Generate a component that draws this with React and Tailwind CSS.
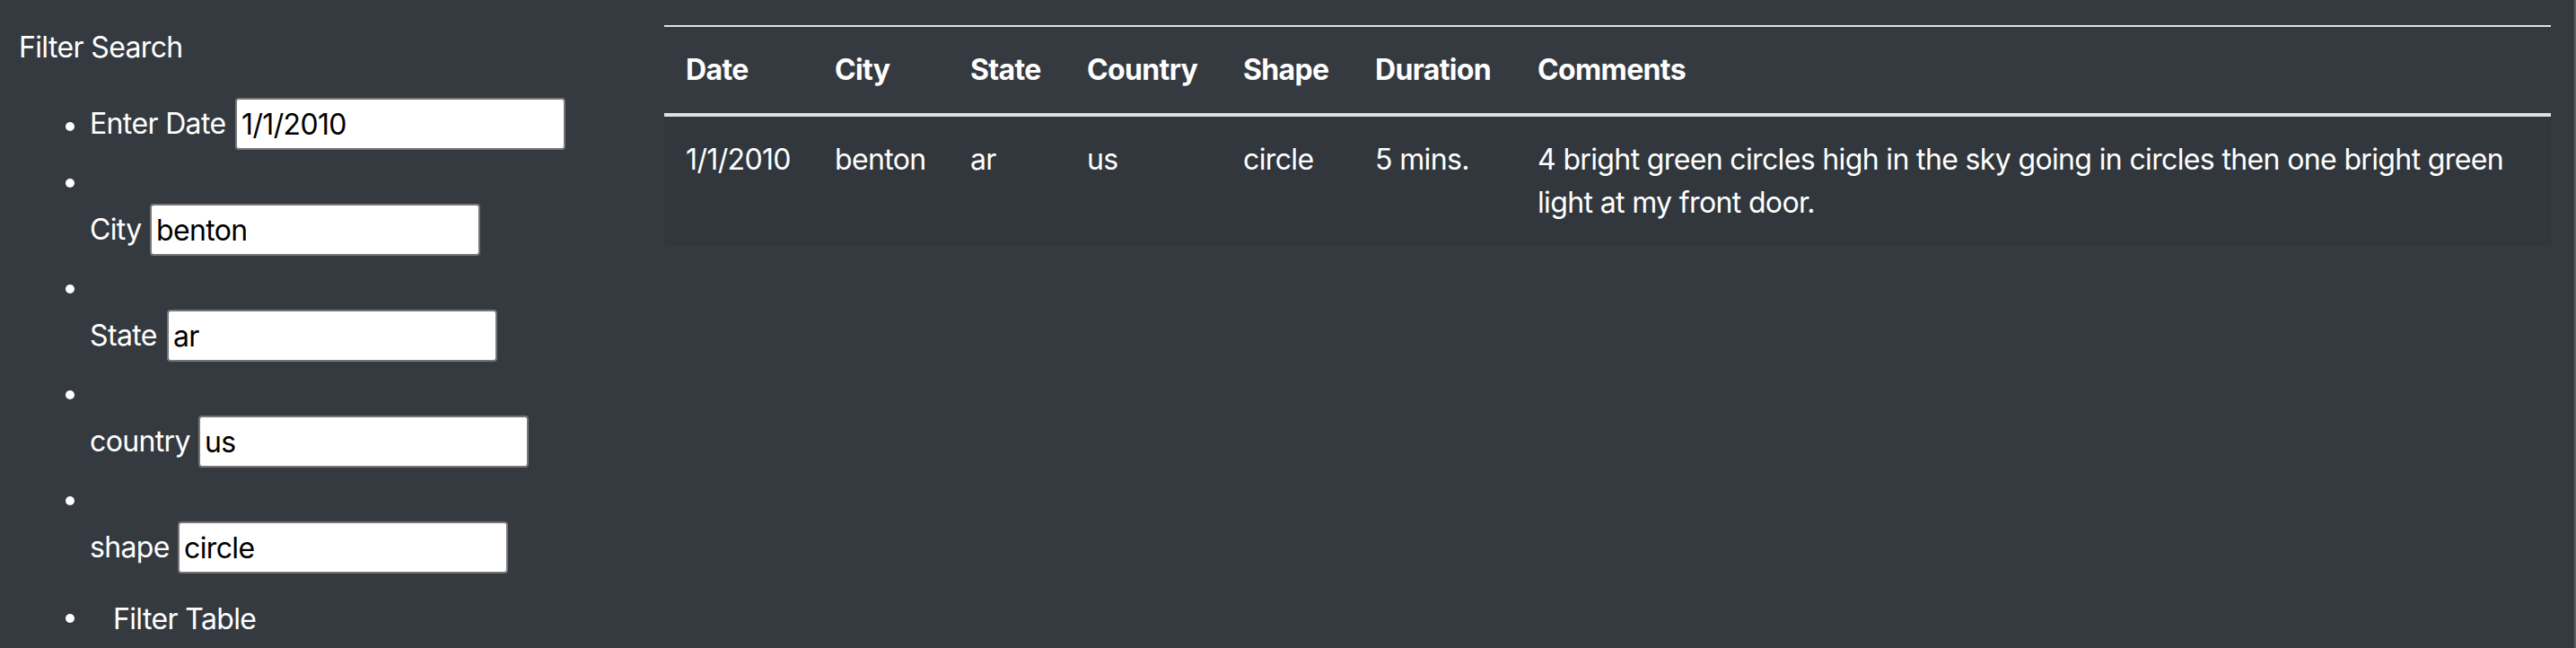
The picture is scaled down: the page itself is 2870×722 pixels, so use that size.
import React from "react";

const fields = [
  { label: "City", value: "benton", lw: "w-[58px]" },
  { label: "State", value: "ar", lw: "w-[77px]" },
  { label: "country", value: "us", lw: "w-[112px]" },
  { label: "shape", value: "circle", lw: "w-[89px]" },
];

function Bullet({ extra = "" }) {
  return (
    <span className="flex w-[27px] shrink-0">
      <span className={"block w-[10px] h-[10px] rounded-full bg-white " + extra} />
    </span>
  );
}

function Field({ label, value, lw }) {
  return (
    <div className="flex items-center h-[58px] gap-[9px]">
      <span className={lw + " shrink-0 whitespace-nowrap leading-[48px]"}>{label}</span>
      <input
        defaultValue={value}
        className="w-[368px] h-[58px] shrink-0 bg-white text-black border-2 border-[#767676] rounded-[4px] px-[5px] text-[32px] leading-[48px] outline-none font-[Inter,sans-serif] tracking-[-0.02em]"
      />
    </div>
  );
}

const headers = ["Date", "City", "State", "Country", "Shape", "Duration", "Comments"];
const row = [
  "1/1/2010",
  "benton",
  "ar",
  "us",
  "circle",
  "5 mins.",
  "4 bright green circles high in the sky going in circles then one bright green light at my front door.",
];

export default function App() {
  return (
    <div className="h-[722px] w-[2870px] overflow-hidden bg-[#343a40] text-white font-[Inter,sans-serif] text-[32px] leading-[48px] tracking-[-0.02em] flex border-r-2 border-[#5c6064]">
      <aside className="w-[740px] shrink-0 pl-[21px] pt-[29px]">
        <div className="leading-[48px]">Filter Search</div>
        <ul className="mt-[32px] pl-[52px] flex flex-col">
          <li className="flex items-center h-[58px]">
            <Bullet extra="mt-[6px]" />
            <Field label="Enter Date" value="1/1/2010" lw="w-[153px]" />
          </li>
          {fields.map((f) => (
            <li key={f.label} className="mt-[13px] flex flex-col">
              <div className="flex items-center h-[47px]">
                <Bullet />
              </div>
              <div className="pl-[27px]">
                <Field {...f} />
              </div>
            </li>
          ))}
          <li className="mt-[13px] flex items-center">
            <Bullet extra="-mt-[2px]" />
            <button className="border-2 border-transparent px-[24px] py-[12px] leading-[48px] text-white bg-transparent text-[32px]">
              Filter Table
            </button>
          </li>
        </ul>
      </aside>
      <main className="flex-1 pt-[28px] pr-[26px]">
        <table className="w-full table-fixed border-collapse">
          <colgroup>
            <col className="w-[166px]" />
            <col className="w-[151px]" />
            <col className="w-[130px]" />
            <col className="w-[174px]" />
            <col className="w-[147px]" />
            <col className="w-[181px]" />
            <col />
          </colgroup>
          <thead>
            <tr>
              {headers.map((h) => (
                <th
                  key={h}
                  className="text-left font-bold px-[24px] py-[24px] leading-[48px] border-t-2 border-b-4 border-[#dee2e6] align-bottom whitespace-nowrap"
                >
                  {h}
                </th>
              ))}
            </tr>
          </thead>
          <tbody>
            <tr className="bg-[#31373c]">
              {row.map((c, i) => (
                <td key={i} className="px-[24px] py-[24px] leading-[48px] align-top text-left">
                  {c}
                </td>
              ))}
            </tr>
          </tbody>
        </table>
      </main>
    </div>
  );
}
